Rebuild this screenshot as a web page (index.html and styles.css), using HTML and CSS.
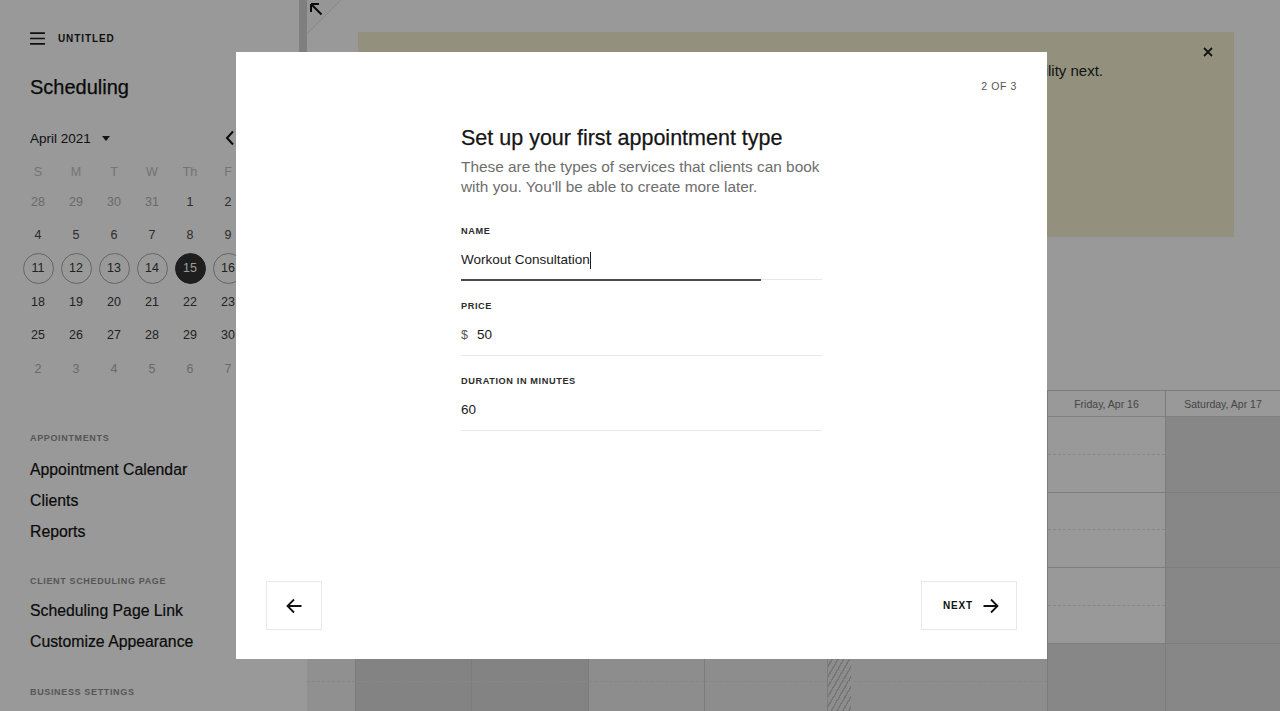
FILE: index.html
```html
<!DOCTYPE html>
<html lang="en">
<head>
<meta charset="utf-8">
<title>Scheduling</title>
<link rel="stylesheet" href="styles.css">
</head>
<body>
<div class="app">
  <aside class="sidebar">
    <div class="brand">
      <svg class="burger" width="16" height="14" viewBox="0 0 16 14"><path d="M0 1.2h16M0 7h16M0 12.8h16" stroke="#1a1a1a" stroke-width="1.7" fill="none"/></svg>
      <span class="site-name">UNTITLED</span>
    </div>
    <h1 class="app-title">Scheduling</h1>
    <div class="cal-head">
      <span class="month">April 2021</span>
      <svg class="caret" width="8" height="5" viewBox="0 0 8 5"><path d="M0 0h8L4 5z" fill="#222"/></svg>
      <span class="spacer"></span>
      <svg class="chev" width="10" height="16" viewBox="0 0 10 16"><path d="M8 1.5L2 8l6 6.5" stroke="#111" stroke-width="2" fill="none"/></svg>
      <svg class="chev" width="10" height="16" viewBox="0 0 10 16"><path d="M2 1.5L8 8l-6 6.5" stroke="#111" stroke-width="2" fill="none"/></svg>
    </div>
    <div class="cal-grid">
      <span class="wd">S</span><span class="wd">M</span><span class="wd">T</span><span class="wd">W</span><span class="wd">Th</span><span class="wd">F</span><span class="wd">S</span>
      <span class="d other">28</span><span class="d other">29</span><span class="d other">30</span><span class="d other">31</span><span class="d past">1</span><span class="d past">2</span><span class="d past">3</span>
      <span class="d past">4</span><span class="d past">5</span><span class="d past">6</span><span class="d past">7</span><span class="d past">8</span><span class="d past">9</span><span class="d past">10</span>
      <span class="d"><span class="ring">11</span></span><span class="d"><span class="ring">12</span></span><span class="d"><span class="ring">13</span></span><span class="d"><span class="ring">14</span></span><span class="d"><span class="ring today">15</span></span><span class="d"><span class="ring">16</span></span><span class="d"><span class="ring">17</span></span>
      <span class="d">18</span><span class="d">19</span><span class="d">20</span><span class="d">21</span><span class="d">22</span><span class="d">23</span><span class="d">24</span>
      <span class="d">25</span><span class="d">26</span><span class="d">27</span><span class="d">28</span><span class="d">29</span><span class="d">30</span><span class="d other">1</span>
      <span class="d other">2</span><span class="d other">3</span><span class="d other">4</span><span class="d other">5</span><span class="d other">6</span><span class="d other">7</span><span class="d other">8</span>
    </div>
    <div class="nav-label first">APPOINTMENTS</div>
    <div class="nav-group g1">
      <div class="nav-item">Appointment Calendar</div>
      <div class="nav-item">Clients</div>
      <div class="nav-item">Reports</div>
    </div>
    <div class="nav-label second">CLIENT SCHEDULING PAGE</div>
    <div class="nav-group">
      <div class="nav-item">Scheduling Page Link</div>
      <div class="nav-item">Customize Appearance</div>
    </div>
    <div class="nav-label">BUSINESS SETTINGS</div>
  </aside>
  <div class="handle"><div class="handle-bar"></div></div>
  <main class="main">
    <svg class="corner" width="36" height="36" viewBox="0 0 36 36"><path d="M0 0H34L0 34Z" fill="#fbfbfb"/><path d="M34 0L0 34" stroke="#e4e4e4" stroke-width="1"/><path d="M4.5 4.5L14.5 14.5M4 4h8M4 4v8" stroke="#111" stroke-width="2" fill="none"/></svg>
    <div class="top">
      <div class="banner">
        <p class="banner-text">Your calendar is ready. Set up your first appointment type, then your availability next.</p>
        <svg class="banner-close" width="10" height="10" viewBox="0 0 10 10"><path d="M1 1l8 8M9 1l-8 8" stroke="#222" stroke-width="1.8"/></svg>
      </div>
    </div>
    <div class="week">
      <div class="col time-col">
        <div class="col-head"></div>
        <div class="hour"><div class="half"></div></div>
        <div class="hour"><div class="half"></div></div>
        <div class="hour"><div class="half"></div></div>
        <div class="hour"><div class="half"></div></div>
      </div>
      <div class="col">
        <div class="col-head">Sunday, Apr 11</div>
        <div class="hour off"><div class="half"></div></div>
        <div class="hour off"><div class="half"></div></div>
        <div class="hour off"><div class="half"></div></div>
        <div class="hour off2"><div class="half"></div></div>
      </div>
      <div class="col">
        <div class="col-head">Monday, Apr 12</div>
        <div class="hour"><div class="half"></div></div>
        <div class="hour"><div class="half"></div></div>
        <div class="hour"><div class="half"></div></div>
        <div class="hour off2"><div class="half"></div></div>
      </div>
      <div class="col">
        <div class="col-head">Tuesday, Apr 13</div>
        <div class="hour"><div class="half"></div></div>
        <div class="hour"><div class="half"></div></div>
        <div class="hour"><div class="half"></div></div>
        <div class="hour off3"><div class="half"></div></div>
      </div>
      <div class="col">
        <div class="col-head">Wednesday, Apr 14</div>
        <div class="hour"><div class="half"></div></div>
        <div class="hour"><div class="half"></div></div>
        <div class="hour"><div class="half"></div></div>
        <div class="hour off3"><div class="half"></div></div>
      </div>
      <div class="col">
        <div class="col-head">Thursday, Apr 15</div>
        <div class="hour"><div class="half"></div></div>
        <div class="hour"><div class="half"></div></div>
        <div class="hour"><div class="half"></div></div>
        <div class="hour off3 hatched"><div class="half"></div></div>
      </div>
      <div class="col">
        <div class="col-head">Friday, Apr 16</div>
        <div class="hour"><div class="half"></div></div>
        <div class="hour"><div class="half"></div></div>
        <div class="hour"><div class="half"></div></div>
        <div class="hour off"><div class="half"></div></div>
      </div>
      <div class="col">
        <div class="col-head">Saturday, Apr 17</div>
        <div class="hour off"><div class="half"></div></div>
        <div class="hour off"><div class="half"></div></div>
        <div class="hour off"><div class="half"></div></div>
        <div class="hour off"><div class="half"></div></div>
      </div>
    </div>
  </main>
</div>

<div class="overlay">
  <div class="modal">
    <div class="modal-top"><span class="step">2 OF 3</span></div>
    <div class="modal-body">
      <h2 class="m-title">Set up your first appointment type</h2>
      <p class="m-desc">These are the types of services that clients can book<br>with you. You'll be able to create more later.</p>
      <div class="field">
        <div class="f-label">NAME</div>
        <div class="f-value">Workout Consultation<span class="text-caret"></span></div>
        <div class="f-line"><div class="f-line-active"></div></div>
      </div>
      <div class="field">
        <div class="f-label">PRICE</div>
        <div class="f-value"><span class="currency">$</span>50</div>
        <div class="f-line"></div>
      </div>
      <div class="field">
        <div class="f-label">DURATION IN MINUTES</div>
        <div class="f-value">60</div>
        <div class="f-line"></div>
      </div>
    </div>
    <div class="modal-foot">
      <button class="btn btn-back" type="button" aria-label="Back">
        <svg width="16" height="16" viewBox="0 0 16 16"><path d="M15.5 8H1.5M8 1.5L1.5 8L8 14.5" stroke="#111" stroke-width="1.8" fill="none"/></svg>
      </button>
      <button class="btn btn-next" type="button">
        <span>NEXT</span>
        <svg width="16" height="16" viewBox="0 0 16 16"><path d="M0.5 8H14.5M8 1.5L14.5 8L8 14.5" stroke="#111" stroke-width="1.8" fill="none"/></svg>
      </button>
    </div>
  </div>
</div>
</body>
</html>
```

FILE: styles.css
```css
html, body {
  margin: 0;
  padding: 0;
}
body {
  font-family: "Liberation Sans", Arial, sans-serif;
  color: #111;
  height: 711px;
  overflow: hidden;
  background: #fff;
}

.app {
  display: flex;
  height: 711px;
}

/* Sidebar */
.sidebar {
  width: 299px;
  flex: none;
  box-sizing: border-box;
  padding: 0 30px;
  display: flex;
  flex-direction: column;
  background: #fff;
}
.brand {
  display: flex;
  align-items: center;
  height: 20px;
  margin-top: 28px;
}
.burger {
  display: block;
  width: 15px;
  height: 13px;
}
.site-name {
  margin-left: 13px;
  font-size: 10px;
  font-weight: bold;
  letter-spacing: 0.9px;
  color: #1a1a1a;
}
.app-title {
  margin: 27px 0 0;
  font-size: 20px;
  line-height: 24px;
  font-weight: normal;
  color: #111;
  -webkit-text-stroke: 0.25px #111;
}
.cal-head {
  display: flex;
  align-items: center;
  height: 20px;
  margin-top: 29px;
}
.month {
  font-size: 13.5px;
  color: #1a1a1a;
}
.caret {
  margin-left: 11px;
  display: block;
}
.spacer {
  flex: 1;
}
.chev {
  display: block;
  margin-left: 24px;
}
.cal-grid {
  display: grid;
  grid-template-columns: repeat(7, 38px);
  grid-template-rows: 27px;
  grid-auto-rows: 33.4px;
  margin: 10px 0 0 -11px;
  width: 266px;
}
.wd, .d {
  display: flex;
  align-items: center;
  justify-content: center;
  font-size: 12.5px;
}
.wd {
  color: #c2c2c2;
}
.d {
  color: #383838;
}
.d.other {
  color: #b0b0b0;
}
.d.past {
  color: #4a4a4a;
}
.ring {
  width: 31px;
  height: 31px;
  box-sizing: border-box;
  border-radius: 50%;
  border: 1.5px solid #a9a9a9;
  display: flex;
  align-items: center;
  justify-content: center;
  color: #383838;
}
.ring.today {
  background: #333;
  border-color: #333;
  color: #fff;
}
.nav-label {
  font-size: 9px;
  line-height: 12px;
  font-weight: bold;
  letter-spacing: 0.65px;
  color: #8f8f8f;
  margin-top: 28.5px;
}
.nav-label.first {
  margin-top: 47px;
}
.nav-label.second {
  margin-top: 27.5px;
}
.nav-group {
  margin-top: 9px;
}
.nav-group.g1 {
  margin-top: 11px;
}
.nav-item {
  font-size: 15.8px;
  line-height: 30.7px;
  color: #111;
  -webkit-text-stroke: 0.2px #111;
}

/* Resize handle */
.handle {
  width: 8px;
  flex: none;
  background: #fff;
}
.handle-bar {
  height: 140px;
  background: #d4d4d4;
}

/* Main */
.main {
  flex: 1;
  min-width: 0;
  position: relative;
  display: flex;
  flex-direction: column;
  background: #fff;
}
.corner {
  position: absolute;
  left: 0;
  top: 0;
  display: block;
}
.top {
  height: 390px;
  box-sizing: border-box;
  padding: 32px 46px 0 51px;
  flex: none;
}
.banner {
  height: 205px;
  background: #f5f2d3;
  display: flex;
  align-items: flex-start;
  padding: 15px 21px 0 40px;
  box-sizing: border-box;
}
.banner-text {
  flex: 1;
  min-width: 0;
  margin: 14px 100px 0 0;
  font-size: 15px;
  line-height: 20px;
  color: #222;
  text-align: right;
  white-space: nowrap;
}
.banner-close {
  display: block;
  flex: none;
}

/* Week grid */
.week {
  flex: 1;
  display: grid;
  grid-template-columns: 48px 116px 117px 116px 123px 220px 118px 1fr;
  border-top: 1px solid #cfcfcf;
  overflow: hidden;
}
.col {
  display: flex;
  flex-direction: column;
  border-left: 1px solid #cfcfcf;
  min-width: 0;
}
.time-col {
  border-left: none;
  background: #f1f1f1;
}
.col-head {
  height: 26px;
  flex: none;
  box-sizing: border-box;
  border-bottom: 1px solid #d6d6d6;
  font-size: 10.5px;
  color: #747474;
  display: flex;
  align-items: center;
  justify-content: center;
  white-space: nowrap;
}
.hour {
  height: 75.6px;
  flex: none;
  box-sizing: border-box;
  border-bottom: 1px solid #d2d2d2;
}
.half {
  height: 37.8px;
  box-sizing: border-box;
  border-bottom: 1px dashed #e2e2e2;
}
.hour.off {
  background-color: #e2e2e2;
}
.hour.off2 {
  background-color: #dbdbdb;
}
.hour.off3 {
  background-color: #ececec;
}
.hour.hatched {
  background-image: repeating-linear-gradient(-60deg, #c4c4c4 0 1.4px, transparent 1.4px 5px);
  background-size: 23px 100%;
  background-repeat: no-repeat;
}

/* Modal */
.overlay {
  position: fixed;
  inset: 0;
  background: rgba(0, 0, 0, 0.4);
  display: flex;
  align-items: center;
  justify-content: center;
  padding-left: 3px;
}
.modal {
  width: 811px;
  height: 607px;
  background: #fff;
  display: flex;
  flex-direction: column;
  box-sizing: border-box;
}
.modal-top {
  padding: 27px 30px 0;
  display: flex;
  justify-content: flex-end;
}
.step {
  font-size: 10.5px;
  line-height: 14px;
  letter-spacing: 0.6px;
  color: #555;
}
.modal-body {
  width: 361px;
  margin: 0 auto;
}
.m-title {
  margin: 31px 0 0;
  font-size: 21.5px;
  line-height: 28px;
  font-weight: normal;
  color: #151515;
  white-space: nowrap;
  -webkit-text-stroke: 0.25px #151515;
}
.m-desc {
  margin: 5px 0 0;
  font-size: 15.4px;
  line-height: 20px;
  color: #6e6e6e;
  white-space: nowrap;
}
.field {
  margin-top: 19.5px;
}
.field:first-of-type {
  margin-top: 28px;
}
.f-label {
  font-size: 9.2px;
  line-height: 12px;
  font-weight: bold;
  letter-spacing: 0.6px;
  color: #2c2c2c;
}
.f-value {
  margin-top: 13px;
  font-size: 13.5px;
  line-height: 20px;
  padding-bottom: 10px;
  color: #1a1a1a;
  display: flex;
  align-items: center;
}
.currency {
  color: #555;
  font-size: 12.5px;
  margin-right: 9px;
}
.text-caret {
  display: inline-block;
  width: 1px;
  height: 17px;
  background: #222;
}
.f-line {
  height: 1px;
  background: #e8e8e8;
}
.f-line-active {
  width: 300px;
  height: 2px;
  margin-top: -1px;
  background: #4a4a4a;
}
.modal-foot {
  margin-top: auto;
  padding: 0 30px 29px;
  display: flex;
  justify-content: space-between;
  align-items: flex-end;
}
.btn {
  height: 49px;
  box-sizing: border-box;
  background: #fff;
  border: 1px solid #e8e8e8;
  border-radius: 0;
  display: flex;
  align-items: center;
  justify-content: center;
  padding: 0;
  font-family: inherit;
  cursor: pointer;
}
.btn svg {
  display: block;
}
.btn-back {
  width: 56px;
}
.btn-next {
  width: 96px;
  justify-content: flex-start;
  padding-left: 21px;
}
.btn-next span {
  font-size: 10px;
  font-weight: bold;
  letter-spacing: 0.8px;
  color: #111;
  margin-right: 10px;
}
```
